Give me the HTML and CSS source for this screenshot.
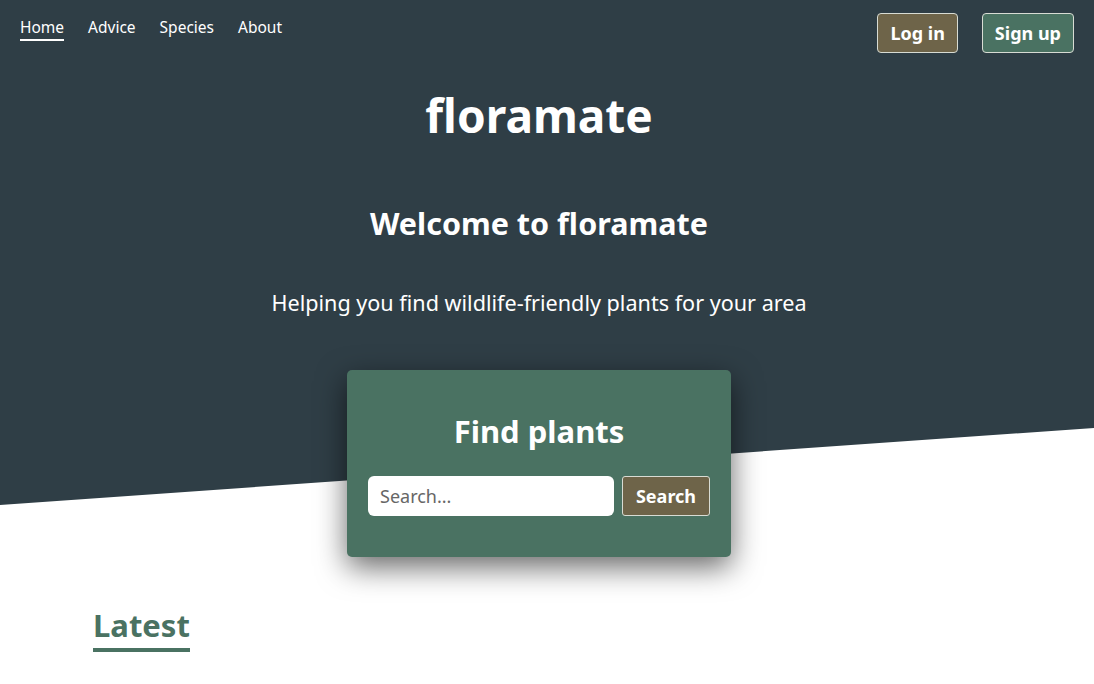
FILE: index.html
```html
<!DOCTYPE html>
<html lang="en">
<head>
<meta charset="utf-8">
<title>floramate</title>
<link rel="stylesheet" href="styles.css">
</head>
<body>
<header class="hero">
  <nav class="topbar">
    <ul class="nav-links">
      <li><a class="nav-link active" href="#">Home</a></li>
      <li><a class="nav-link" href="#">Advice</a></li>
      <li><a class="nav-link" href="#">Species</a></li>
      <li><a class="nav-link" href="#">About</a></li>
    </ul>
    <div class="auth">
      <a class="btn btn-brown" href="#">Log in</a>
      <a class="btn btn-green" href="#">Sign up</a>
    </div>
  </nav>
  <div class="hero-body">
    <h1 class="logo">floramate</h1>
    <h2 class="welcome">Welcome to floramate</h2>
    <p class="tagline">Helping you find wildlife-friendly plants for your area</p>
    <div class="finder">
      <h3 class="finder-title">Find plants</h3>
      <form class="finder-form">
        <input class="finder-input" type="text" placeholder="Search...">
        <button class="btn btn-brown finder-btn" type="button">Search</button>
      </form>
    </div>
  </div>
</header>
<main class="content">
  <h2 class="section-title">Latest</h2>
</main>
</body>
</html>
```
FILE: styles.css
```css
* { box-sizing: border-box; }
html, body { margin: 0; padding: 0; }
body {
  font-family: "Noto Sans", "Open Sans", sans-serif;
  color: #fff;
  background: #fff;
}
.hero {
  position: relative;
  padding: 13px 20px 0;
  text-align: center;
}
.hero::before {
  content: "";
  position: absolute;
  left: 0; top: 0; right: 0;
  height: 505px;
  background: #2f3e46;
  clip-path: polygon(0 0, 100% 0, 100% 428px, 0 505px);
  z-index: -1;
}
.topbar {
  display: flex;
  justify-content: space-between;
  align-items: flex-start;
}
.nav-links {
  display: flex;
  gap: 24px;
  list-style: none;
  margin: 0;
  padding: 4px 0 0;
}
.nav-link {
  display: block;
  color: #fff;
  text-decoration: none;
  font-size: 15.5px;
  line-height: 20px;
  padding-bottom: 2px;
  border-bottom: 2px solid transparent;
}
.nav-link.active { border-bottom-color: #fff; }
.auth { display: flex; gap: 24px; }
.btn {
  display: inline-flex;
  align-items: center;
  justify-content: center;
  height: 40px;
  padding: 0 12px;
  border: 1px solid #d8dcd4;
  border-radius: 4px;
  color: #fff;
  font-family: inherit;
  font-weight: 700;
  font-size: 18px;
  text-decoration: none;
}
.btn-brown { background: #6e6449; }
.btn-green { background: #4a7262; }
.hero-body {
  margin-right: 16px;
}
.logo {
  margin: 30px 0 0;
  font-size: 46px;
  line-height: 64px;
  font-weight: 700;
}
.welcome {
  margin: 56px 0 0;
  font-size: 30.5px;
  line-height: 40px;
  font-weight: 700;
}
.tagline {
  margin: 45px 0 0;
  font-size: 21.6px;
  line-height: 30px;
}
.finder {
  width: 384px;
  margin: 52px auto 0;
  padding: 38px 21px 41px;
  background: #4a7262;
  border-radius: 5px;
  box-shadow: 0 10px 30px rgba(0,0,0,0.6);
}
.finder-title {
  margin: 0;
  font-size: 31px;
  line-height: 46px;
  font-weight: 700;
}
.finder-form {
  display: flex;
  gap: 8px;
  margin-top: 22px;
}
.finder-input {
  flex: 1 1 0;
  min-width: 0;
  width: 0;
  height: 40px;
  border: none;
  border-radius: 6px;
  padding: 0 12px;
  font-family: inherit;
  font-size: 18px;
  color: #333;
}
.finder-input::placeholder { color: #666; }
.finder-btn { flex: 0 0 88px; width: 88px; padding: 0; border-radius: 3px; }
.content {
  padding: 48px 93px 0;
}
.section-title {
  display: inline-block;
  margin: 0;
  color: #4a7262;
  font-size: 31px;
  line-height: 40px;
  font-weight: 700;
  padding-bottom: 3px;
  border-bottom: 4px solid #4a7262;
}
```
